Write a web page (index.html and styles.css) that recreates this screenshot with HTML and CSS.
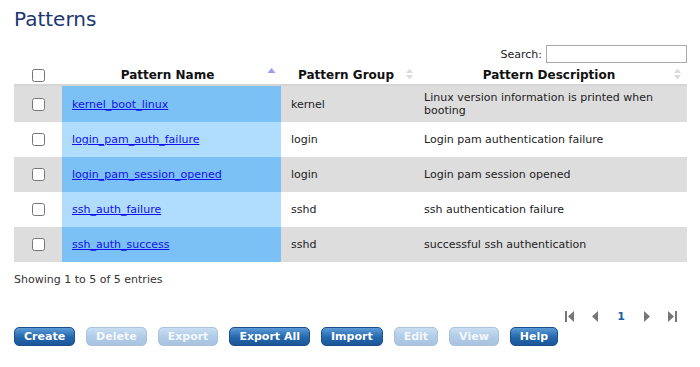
FILE: index.html
```html
<!DOCTYPE html>
<html>

<head>
    <title>Patterns</title>
    <link rel="stylesheet" href="styles.css">
</head>

<body>
    <div class="page">
        <h1 class="page-title">Patterns</h1>

        <div class="table-top">
            <label class="search">Search: <input type="text" class="search-input"></label>
        </div>

        <table class="patterns">
            <thead>
                <tr>
                    <th class="col-check"><input type="checkbox"></th>
                    <th class="col-name sorted">Pattern Name
                        <svg class="sort-icon" width="9" height="12" viewBox="0 0 9 12"><path d="M0.5 6 L4.5 1 L8.5 6 Z" fill="#9d9df5"/></svg>
                    </th>
                    <th class="col-group">Pattern Group
                        <svg class="sort-icon" width="9" height="14" viewBox="0 0 9 14"><path d="M1 6 L4.5 1.5 L8 6 Z M1 8 L4.5 12.5 L8 8 Z" fill="#dcdcdc"/></svg>
                    </th>
                    <th class="col-desc">Pattern Description
                        <svg class="sort-icon" width="9" height="14" viewBox="0 0 9 14"><path d="M1 6 L4.5 1.5 L8 6 Z M1 8 L4.5 12.5 L8 8 Z" fill="#dcdcdc"/></svg>
                    </th>
                </tr>
            </thead>
            <tbody>
                <tr class="odd">
                    <td class="col-check"><input type="checkbox"></td>
                    <td class="col-name"><a href="#">kernel_boot_linux</a></td>
                    <td>kernel</td>
                    <td class="col-desc">Linux version information is printed when booting</td>
                </tr>
                <tr class="even">
                    <td class="col-check"><input type="checkbox"></td>
                    <td class="col-name"><a href="#">login_pam_auth_failure</a></td>
                    <td>login</td>
                    <td class="col-desc">Login pam authentication failure</td>
                </tr>
                <tr class="odd">
                    <td class="col-check"><input type="checkbox"></td>
                    <td class="col-name"><a href="#">login_pam_session_opened</a></td>
                    <td>login</td>
                    <td class="col-desc">Login pam session opened</td>
                </tr>
                <tr class="even">
                    <td class="col-check"><input type="checkbox"></td>
                    <td class="col-name"><a href="#">ssh_auth_failure</a></td>
                    <td>sshd</td>
                    <td class="col-desc">ssh authentication failure</td>
                </tr>
                <tr class="odd">
                    <td class="col-check"><input type="checkbox"></td>
                    <td class="col-name"><a href="#">ssh_auth_success</a></td>
                    <td>sshd</td>
                    <td class="col-desc">successful ssh authentication</td>
                </tr>
            </tbody>
        </table>

        <div class="table-info">Showing 1 to 5 of 5 entries</div>

        <div class="paging">
            <svg width="10" height="11" viewBox="0 0 10 11"><rect x="0" y="0" width="2" height="11" fill="#777"/><path d="M9 0 L3 5.5 L9 11 Z" fill="#777"/></svg>
            <svg width="7" height="11" viewBox="0 0 7 11"><path d="M6 0 L0 5.5 L6 11 Z" fill="#777"/></svg>
            <span class="page-num">1</span>
            <svg width="7" height="11" viewBox="0 0 7 11"><path d="M1 0 L7 5.5 L1 11 Z" fill="#777"/></svg>
            <svg width="10" height="11" viewBox="0 0 10 11"><path d="M1 0 L7 5.5 L1 11 Z" fill="#777"/><rect x="8" y="0" width="2" height="11" fill="#777"/></svg>
        </div>

        <div class="actions">
            <button class="btn">Create</button>
            <button class="btn" disabled>Delete</button>
            <button class="btn" disabled>Export</button>
            <button class="btn">Export All</button>
            <button class="btn">Import</button>
            <button class="btn" disabled>Edit</button>
            <button class="btn" disabled>View</button>
            <button class="btn">Help</button>
        </div>
    </div>
</body>

</html>
```

FILE: styles.css
```css
body {
    margin: 0;
    background-color: #fff;
    font-family: "DejaVu Sans", Verdana, sans-serif;
    font-size: 11px;
    color: #222;
}

.page {
    padding: 8px 13px 0 14px;
}

.page-title {
    margin: 0;
    font-size: 20px;
    font-weight: normal;
    line-height: 22px;
    color: #1b3770;
}

.table-top {
    display: flex;
    justify-content: flex-end;
    margin-top: 15px;
    height: 18px;
}

.search {
    display: flex;
    align-items: center;
    gap: 4px;
    font-size: 11px;
}

.search-input {
    width: 135px;
    height: 12px;
    margin: 0;
    padding: 2px;
    border: 1px solid #aaa;
}

.patterns {
    width: 673px;
    border-collapse: collapse;
    table-layout: fixed;
}

.patterns th {
    position: relative;
    height: 19px;
    padding: 2px 18px 0 10px;
    font-size: 12px;
    font-weight: bold;
    color: #111;
    text-align: center;
    border-bottom: 2px solid #d5d5d5;
}

.sort-icon {
    position: absolute;
    right: 5px;
    top: 4px;
}

.patterns td {
    height: 25px;
    padding: 5px 10px;
    line-height: 13px;
    vertical-align: middle;
}

.patterns tr:first-child td {
    height: 26px;
}

.patterns .col-check {
    width: 28px;
    text-align: center;
}

.patterns th.col-check {
    padding: 2px 10px 0;
}

.patterns .col-name {
    width: 199px;
}

.patterns th.col-name {
    width: 191px;
}

.patterns th.col-group {
    width: 110px;
}

.patterns td.col-desc {
    padding-left: 5px;
    padding-right: 20px;
}

.patterns input[type="checkbox"] {
    margin: 0;
    width: 13px;
    height: 13px;
    vertical-align: middle;
}

.patterns tr.odd td {
    background-color: #dddddd;
}

.patterns tr.odd td.col-name {
    background-color: #7cc1f5;
}

.patterns tr.even td.col-name {
    background-color: #b0ddfd;
}

.patterns a {
    color: #1010ee;
}

.table-info {
    margin-top: 11px;
    color: #333;
}

.paging {
    display: flex;
    justify-content: flex-end;
    align-items: center;
    gap: 17px;
    margin-top: 24px;
    padding-right: 10px;
}

.page-num {
    padding: 0 1px;
    font-weight: bold;
    color: #1d62a8;
}

.actions {
    display: flex;
    gap: 11px;
    margin-top: 4px;
}

.btn {
    height: 19px;
    padding: 0 9px;
    border: 1px solid #1b4f8c;
    border-radius: 5px;
    background: linear-gradient(#5b9ad6, #2467ad 55%, #1c5698);
    color: #fff;
    font-family: "DejaVu Sans", Verdana, sans-serif;
    font-size: 11px;
    font-weight: bold;
    cursor: pointer;
}

.btn:disabled {
    border-color: #a9c3df;
    background: linear-gradient(#c9def2, #b0cbe7 55%, #a8c2df);
    color: #f4f8fc;
    cursor: default;
}
```
